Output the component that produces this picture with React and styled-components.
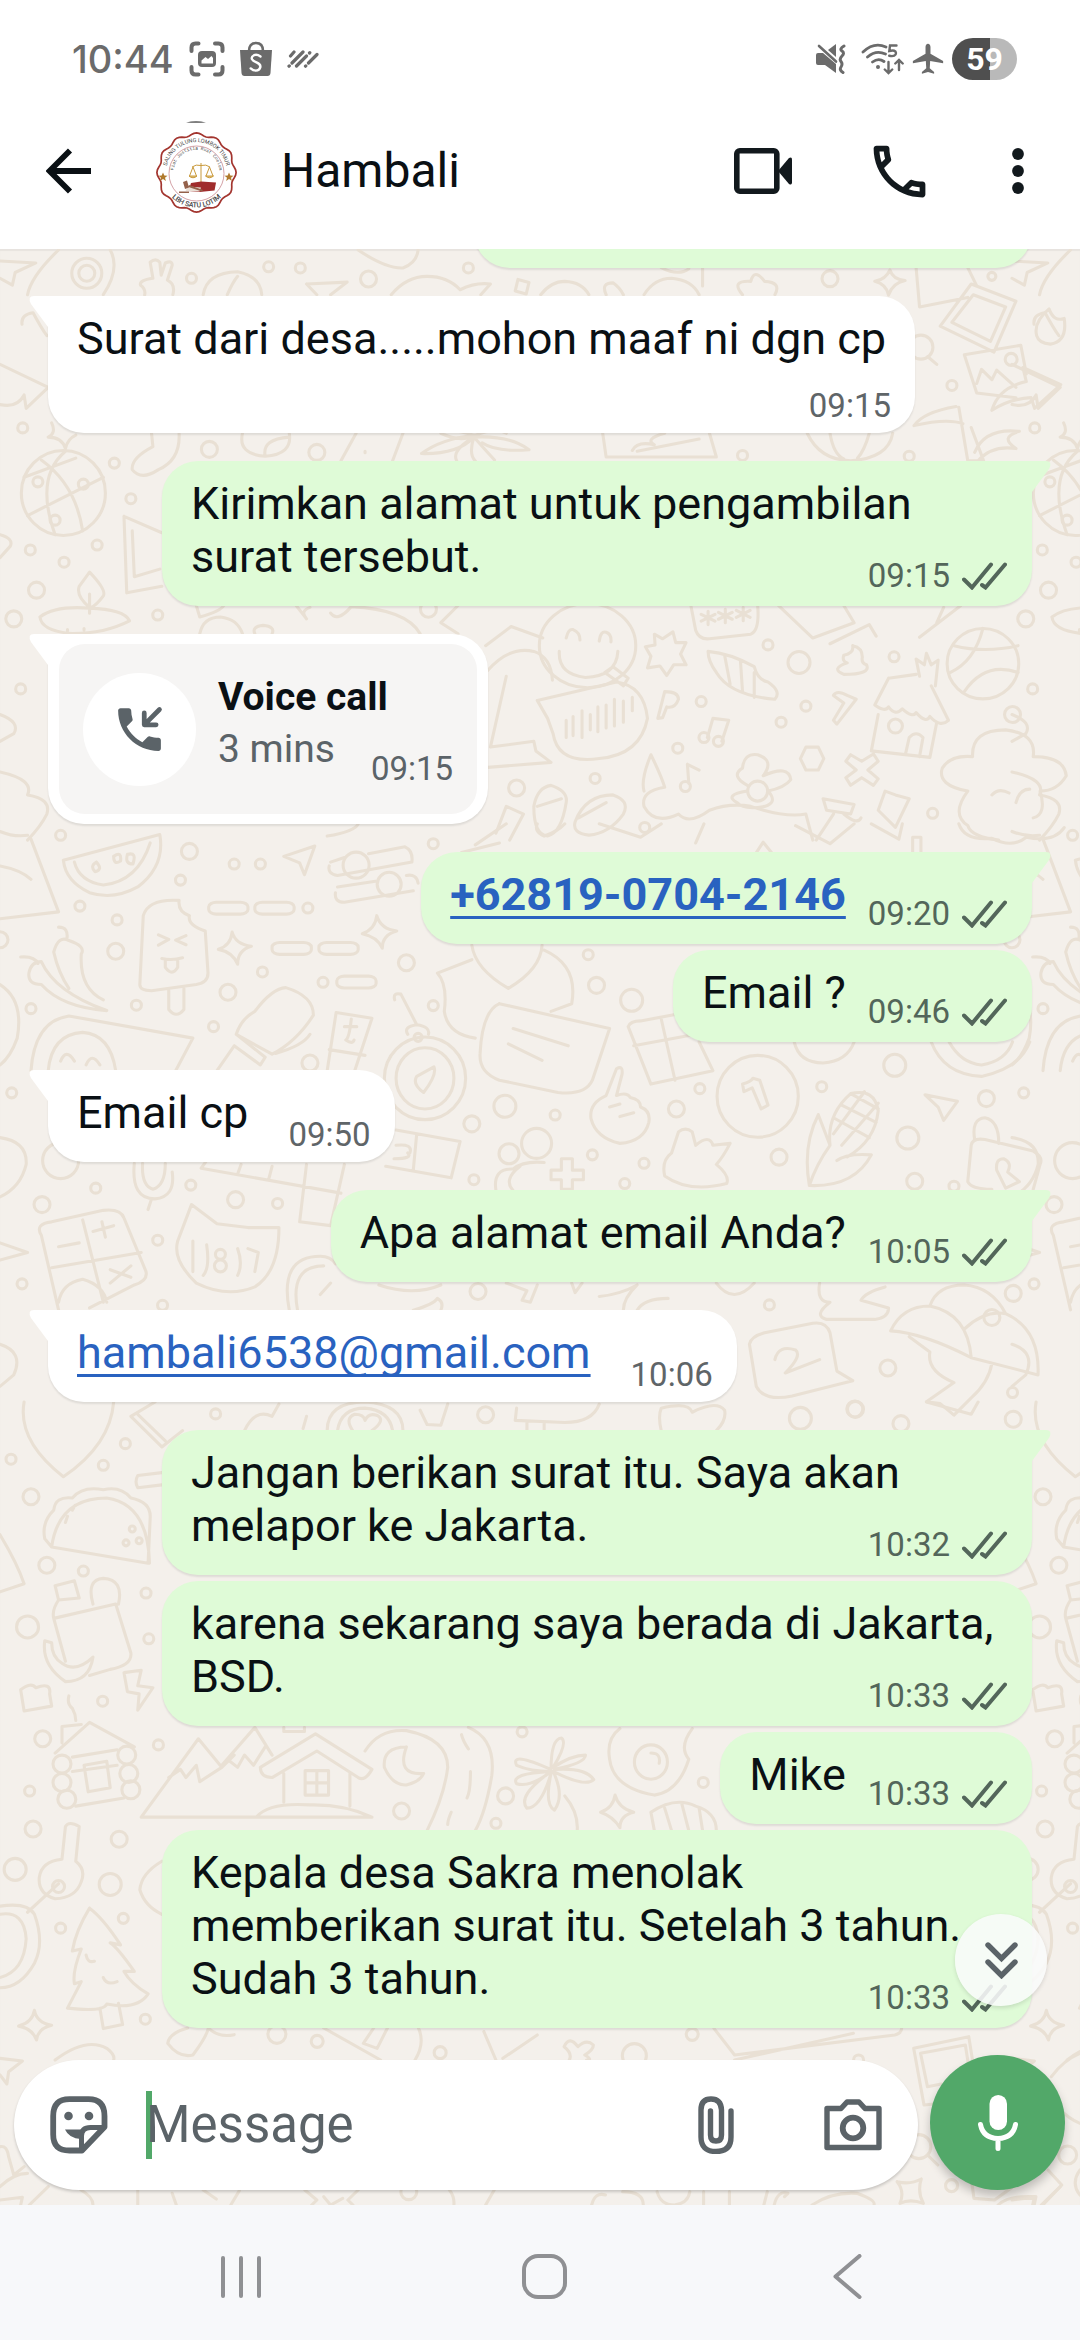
import React from "react";
import styled, { createGlobalStyle, css } from "styled-components";

const color = {
  ink: "#0a1014",
  icon: "#5b6368",
  status: "#6b6b6b",
  link: "#2962c0",
  sent: "#dffbd7",
  received: "#ffffff",
  wall: "#f4f0eb",
  doodle: "#e9e0d4",
  green: "#52a869",
  nav: "#f7f8fa",
};

const GlobalStyle = createGlobalStyle`
  *, *::before, *::after { box-sizing: border-box; }
  body { margin: 0; background: #fff; }
  button { border: 0; padding: 0; background: none; font: inherit; color: inherit; }
  svg { display: block; flex: none; }
`;

/* ---------- layout ---------- */

const Screen = styled.div`
  display: flex;
  flex-direction: column;
  height: 100vh;
  min-height: 900px;
  font-family: Roboto, "Liberation Sans", sans-serif;
  color: ${color.ink};
  background: #fff;
`;

const StatusBar = styled.div`
  display: flex;
  align-items: center;
  justify-content: space-between;
  height: 93px;
  padding: 25px 63px 0 72px;
  color: ${color.status};
`;

const StatusGroup = styled.div`
  display: flex;
  align-items: center;
  gap: ${(p) => p.$gap}px;
`;

const Clock = styled.span`
  font: 500 38px/42px Inter, Roboto, sans-serif;
`;

const Battery = styled.span`
  display: flex;
  align-items: center;
  justify-content: center;
  width: 65px;
  height: 42px;
  border-radius: 21px;
  background: linear-gradient(90deg, #4f4f4f 59%, #b9b9b9 59%);
  color: #fff;
  font: 700 32px/42px Roboto, sans-serif;
`;

const Header = styled.header`
  display: flex;
  align-items: center;
  height: 156px;
  padding: 0 11px 0 46px;
`;

const HeaderButton = styled.button`
  display: flex;
  align-items: center;
  justify-content: center;
  width: ${(p) => p.$width}px;
  height: 120px;
`;

const BackButton = styled(HeaderButton)`
  justify-content: flex-start;
`;

const Contact = styled.h1`
  flex: 1;
  margin: 0 0 0 35px;
  font-size: 48px;
  line-height: 56px;
  font-weight: 400;
`;

const Chat = styled.main`
  position: relative;
  flex: 1;
  min-height: 0;
  display: flex;
  flex-direction: column;
  background: ${color.wall};
  overflow: hidden;
  box-shadow: inset 0 2px 1px rgba(0, 0, 0, 0.05);
`;

const Wallpaper = styled.svg`
  position: absolute;
  top: 0;
  left: 0;
  fill: none;
  stroke: ${color.doodle};
  stroke-width: 3.1;
  stroke-linecap: round;
  stroke-linejoin: round;
  path,
  ellipse,
  rect {
    vector-effect: non-scaling-stroke;
  }
`;

const Messages = styled.div`
  position: relative;
  flex: 1;
  min-height: 0;
  display: flex;
  flex-direction: column;
  justify-content: flex-end;
  padding: 0 48px 27px;
  overflow: hidden;
`;

/* ---------- bubbles ---------- */

const tail = css`
  &::before {
    content: "";
    position: absolute;
    top: 0;
    width: 22px;
    height: 34px;
    background: inherit;
    clip-path: path("M5 0 H22 V34 L19 31 L2 8 Q-2 0 5 0 Z");
    ${(p) => (p.$sent ? "right: -19px; transform: scaleX(-1);" : "left: -19px;")}
  }
`;

const Bubble = styled.article`
  position: relative;
  flex: none;
  display: ${(p) => (p.$stacked ? "flex" : "block")};
  flex-direction: column;
  align-self: ${(p) => (p.$sent ? "flex-end" : "flex-start")};
  max-width: calc(100% - 114px);
  margin-top: ${(p) => (p.$first ? 28 : 6)}px;
  padding: ${(p) => (p.$sent ? "16px 35px 11px 29px" : "16px 29px 8px 29px")};
  border-radius: 36px;
  background: ${(p) => (p.$sent ? color.sent : color.received)};
  box-shadow: 0 2px 2px rgba(0, 0, 0, 0.09);
  font-size: 45px;
  line-height: 53px;
  ${(p) =>
    p.$first &&
    (p.$sent ? "border-top-right-radius: 0;" : "border-top-left-radius: 0;")}
  ${(p) => p.$first && tail}
`;

const EarlierBubble = styled(Bubble)`
  width: 558px;
  height: 92px;
`;

const Meta = styled.div`
  float: right;
  display: flex;
  align-items: center;
  gap: 12px;
  align-self: flex-end;
  margin: ${(p) =>
    p.$stacked
      ? "21px -5px 0 0"
      : p.$sent
      ? "26px -10px 0 22px"
      : "29px -5px 0 40px"};
  color: ${(p) => (p.$sent ? "#53665a" : "#5f6568")};
  font-size: 33px;
  line-height: 39px;
`;

const Link = styled.a`
  color: ${color.link};
  font-weight: ${(p) => (p.$strong ? 700 : 400)};
  text-decoration: underline;
  text-decoration-thickness: 3px;
  text-underline-offset: 6px;
  text-decoration-skip-ink: none;
`;

const CallBubble = styled(Bubble)`
  padding: 10px 11px;
  max-width: none;
`;

const CallCard = styled.div`
  display: flex;
  align-items: center;
  height: 170px;
  padding: 0 24px;
  border-radius: 26px;
  background: #f6f5f4;
`;

const CallIcon = styled.span`
  display: flex;
  align-items: center;
  justify-content: center;
  width: 113px;
  height: 113px;
  margin-right: 22px;
  border-radius: 50%;
  background: #fff;
`;

const CallText = styled.div`
  display: flex;
  flex-direction: column;
  gap: 6px;
  padding-bottom: 13px;
  font-size: 39px;
  line-height: 46px;
`;

const CallRow = styled.div`
  display: flex;
  gap: 36px;
  height: 46px;
  color: ${color.icon};
`;

const CallTime = styled.time`
  padding-top: 20px;
  font-size: 33px;
  line-height: 46px;
`;

/* ---------- bottom ---------- */

const ScrollDown = styled.button`
  position: absolute;
  right: 33px;
  bottom: 199px;
  display: flex;
  align-items: center;
  justify-content: center;
  width: 92px;
  height: 92px;
  border-radius: 50%;
  background: rgba(249, 250, 251, 0.88);
  box-shadow: 0 2px 4px rgba(0, 0, 0, 0.12);
`;

const Composer = styled.form`
  position: relative;
  display: flex;
  align-items: flex-end;
  gap: 12px;
  padding: 0 15px 15px 14px;
`;

const Field = styled.div`
  flex: 1;
  min-width: 0;
  display: flex;
  align-items: center;
  height: 130px;
  padding: 0 36px;
  border-radius: 65px;
  background: #fff;
  box-shadow: 0 2px 3px rgba(0, 0, 0, 0.18);
`;

const TextInput = styled.input`
  flex: 1;
  min-width: 0;
  height: 68px;
  margin: 0 40px 0 38px;
  padding: 0;
  border: 0;
  outline: 0;
  background: linear-gradient(${color.green}, ${color.green}) left / 6px 68px no-repeat;
  color: ${color.ink};
  font: 400 51px/68px Roboto, "Liberation Sans", sans-serif;
  &::placeholder {
    color: ${color.icon};
    opacity: 1;
  }
`;

const FieldButton = styled.button`
  display: flex;
  flex: none;
  margin-left: ${(p) => p.$space || 0}px;
`;

const MicButton = styled.button`
  display: flex;
  flex: none;
  align-items: center;
  justify-content: center;
  width: 135px;
  height: 135px;
  border-radius: 50%;
  background: ${color.green};
  box-shadow: 0 6px 10px rgba(0, 0, 0, 0.22);
`;

const NavBar = styled.nav`
  display: flex;
  align-items: center;
  justify-content: center;
  gap: 210px;
  height: 135px;
  padding: 8px 0 0 8px;
  background: ${color.nav};
`;

const NavButton = styled.button`
  display: flex;
  align-items: center;
  justify-content: center;
  width: 93px;
  height: 90px;
`;

/* ---------- icons ---------- */

const ScreenshotIcon = () => (
  <svg width="36" height="36" viewBox="0 0 36 36" fill="none" stroke="currentColor" strokeWidth="4" strokeLinecap="round">
    <path d="M2.500 10V6.500Q2.500 2.500 6.500 2.500H9.500M26 2.500h3.500q4 0 4 4V10M33.500 26v3.500q0 4-4 4H26M9.500 33.500h-3q-4 0-4-4V26" />
    <rect x="9" y="10" width="18" height="16" rx="4" fill="currentColor" stroke="none" />
    <path d="M12.500 22.500v-3l4-3.500 2.500 2 3.500-3 1.500 2v5.500z" fill="#fff" stroke="none" />
  </svg>
);

const BagIcon = () => (
  <svg width="32" height="36" viewBox="0 0 32 36">
    <path d="M9 10Q9 2 16 2t7 8" fill="none" stroke="currentColor" strokeWidth="2.600" />
    <path d="M0 9h32l-1.500 23q-.3 3-3 3h-23q-2.700 0-3-3z" fill="currentColor" />
    <path d="M20.500 15.500Q17 13 14 14.200q-3 1.500-2 4 .8 1.700 4.500 3.200 4.500 1.800 3.800 5-1 3.200-4.300 3.200-3 0-5.300-2.200" fill="none" stroke="#fff" strokeWidth="2.400" strokeLinecap="round" />
  </svg>
);

const SlashesIcon = () => (
  <svg width="32" height="18" viewBox="0 0 32 18" fill="none" stroke="currentColor" strokeWidth="3.200" strokeLinecap="round">
    <path d="M7 2L3.500 6M16 2L5 13M2 16.200l.3-.3M22.500 3l.3-.3M19.500 6L9.500 16M30 4.500L21.500 13M18.500 16.200l.3-.3" />
  </svg>
);

const MuteIcon = () => (
  <svg width="36" height="30" viewBox="0 0 36 30">
    <path d="M0 11q0-2 2-2h5L20 20v9L9 21H2q-2 0-2-2z" fill="currentColor" />
    <path d="M20 0v13l-8-7z" fill="currentColor" />
    <path d="M3 2l17 15.500" stroke="currentColor" strokeWidth="2.600" strokeLinecap="round" />
    <path d="M28 2q-5 3-2 5t0 5-1 5.500 0 5.500 2 5.500" fill="none" stroke="currentColor" strokeWidth="3" strokeLinecap="round" />
  </svg>
);

const WifiIcon = () => (
  <svg width="44" height="32" viewBox="0 0 44 32" fill="none" stroke="currentColor" strokeWidth="2.800" strokeLinecap="round">
    <path d="M3 9Q14-1.500 26 4M7.500 14Q16 6.500 25.500 11M12.500 19q6-4.500 11.500-.5" />
    <circle cx="18" cy="24" r="2" fill="currentColor" stroke="none" />
    <path d="M36.500 2.500h-6.500l-.7 5.500q6.500-1.500 6.700 2 0 4-6.800 2.800" strokeWidth="2.400" />
    <path d="M28.500 19v10.500M24.800 26.500l3.700 3.500 3.700-3.500M39 27V17.500M35.300 20.500l3.700-3.500 3.700 3.500" strokeWidth="2.400" />
  </svg>
);

const PlaneIcon = () => (
  <svg width="32" height="32" viewBox="1 1.500 22 21">
    <path fill="currentColor" d="M22.400 15v-1.600l-8.700-5V3.700C13.700 2.500 13 1.500 12 1.500s-1.700 1-1.700 2.200v4.700l-8.700 5V15l8.900-1.600.3 4.900-3 2.700v1.100l4.200-1.200 4.200 1.200v-1.100l-3-2.700.3-4.900z" />
  </svg>
);

const BackArrow = () => (
  <svg width="46" height="46" viewBox="0 0 46 46" fill="none" stroke={color.ink} strokeWidth="5.800">
    <path d="M45 23H4M24 2.500L3.500 23 24 43.500" />
  </svg>
);

const VideoIcon = () => (
  <svg width="58" height="46" viewBox="0 0 58 46">
    <rect x="2.800" y="2.800" width="40" height="40.400" rx="3" fill="none" stroke="#12191d" strokeWidth="5.600" />
    <path d="M44 23L55 10q3-1.500 3 1.500v23q0 3-3 1.500z" fill="#12191d" />
  </svg>
);

const PhoneIcon = () => (
  <svg width="69" height="69" viewBox="0 0 24 24" fill="#12191d">
    <path d="M6.540 5c.06.89.21 1.760.45 2.590l-1.200 1.200c-.41-1.200-.67-2.470-.76-3.790h1.510m9.860 12.020c.85.24 1.720.39 2.600.45v1.490c-1.320-.09-2.590-.35-3.800-.75l1.200-1.190M7.500 3H4c-.55 0-1 .45-1 1 0 9.390 7.610 17 17 17 .55 0 1-.45 1-1v-3.490c0-.55-.45-1-1-1-1.240 0-2.450-.2-3.570-.57-.1-.04-.21-.05-.31-.05-.26 0-.51.1-.71.29l-2.200 2.200c-2.830-1.450-5.150-3.760-6.590-6.590l2.200-2.200c.28-.28.36-.67.25-1.020C8.700 6.450 8.500 5.250 8.500 4c0-.55-.45-1-1-1z" />
  </svg>
);

const MoreIcon = () => (
  <svg width="12" height="46" viewBox="0 0 12 46" fill="#12191d">
    <circle cx="6" cy="6" r="5.900" />
    <circle cx="6" cy="23" r="5.900" />
    <circle cx="6" cy="40" r="5.900" />
  </svg>
);

const IncomingCallIcon = () => (
  <svg width="57" height="57" viewBox="0 0 24 24">
    <path fill={color.icon} d="M20 15.500c-1.250 0-2.450-.2-3.570-.57-.35-.11-.74-.03-1.020.24l-2.200 2.200c-2.830-1.440-5.150-3.750-6.590-6.590l2.200-2.210c.28-.26.36-.65.25-1C8.700 6.450 8.500 5.250 8.500 4c0-.55-.45-1-1-1H4c-.55 0-1 .45-1 1 0 9.390 7.610 17 17 17 .55 0 1-.45 1-1v-3.500c0-.55-.45-1-1-1z" />
    <path d="M20.400 3.600L14.500 9.500M14 5v5h5" fill="none" stroke={color.icon} strokeWidth="2" strokeLinecap="round" strokeLinejoin="round" />
  </svg>
);

const Checks = () => (
  <svg width="45" height="28" viewBox="0 0 45 28" fill="none" stroke="currentColor" strokeWidth="4" strokeLinecap="round">
    <path d="M2 17.500L10 25.500 29 2.500M20 23l3.500 2.500L43 2.500" />
  </svg>
);

const ChevronsDown = () => (
  <svg width="33" height="38" viewBox="0 0 33 38" fill="none" stroke={color.icon} strokeWidth="5.400" strokeLinecap="round">
    <path d="M3 4l13.500 13.500L30 4M3 21l13.500 13.500L30 21" />
  </svg>
);

const StickerIcon = () => (
  <svg width="58" height="58" viewBox="0 0 58 58">
    <path d="M19.500 3.200h19Q54.500 3.200 54.500 20v11L32 54.500H19.500Q3.200 54.500 3.200 38.500V20Q3.200 3.200 19.500 3.200z" fill="none" stroke={color.icon} strokeWidth="5.800" strokeLinejoin="round" />
    <path d="M31.500 54V40q0-8.500 9-8.500H54" fill="none" stroke={color.icon} strokeWidth="5" />
    <path d="M15 33.500h20q-3 3-4 9.500-12-.5-16-9.500z" fill={color.icon} />
    <circle cx="18.500" cy="20" r="4.300" fill={color.icon} />
    <circle cx="39" cy="20" r="4.300" fill={color.icon} />
  </svg>
);

const ClipIcon = () => (
  <svg width="36" height="58" viewBox="0 0 36 58" fill="none" stroke={color.icon} strokeWidth="5.400" strokeLinecap="round">
    <path d="M33 15v26q0 14.500-15 14.500T3 41V14Q3 3 13 3t10.500 11v25q0 6-5.500 6t-5.500-6V15" />
  </svg>
);

const CameraIcon = () => (
  <svg width="58" height="52" viewBox="0 0 58 52" fill="none" stroke={color.icon} strokeWidth="5.400" strokeLinejoin="round">
    <path d="M3 9.500h14l6-6.500h12l6 6.500h14v39H3z" />
    <circle cx="29" cy="29" r="10.300" strokeWidth="5.800" />
  </svg>
);

const MicIcon = () => (
  <svg width="40" height="56" viewBox="0 0 40 56">
    <rect x="11.500" y="0" width="17.500" height="35" rx="8.750" fill="#fff" />
    <path d="M2.500 29.500Q5 43 20 43.500 35 43 37.500 29.500M20 44v9.500" fill="none" stroke="#fff" strokeWidth="5" strokeLinecap="round" />
  </svg>
);

const Avatar = () => {
  const edge = Array.from({ length: 97 }, (_, i) => {
    const a = (i / 96) * Math.PI * 2;
    const r = 38.2 + 1.4 * Math.cos(a * 12);
    return `${i ? "L" : "M"}${(50.5 + r * Math.sin(a)).toFixed(1)} ${(51.500 - r * Math.cos(a)).toFixed(1)}`;
  }).join("");
  return (
    <svg width="100" height="100" viewBox="0 0 100 100" role="img" aria-label="LBH Satu Lotim">
      <defs>
        <path id="ring-top" d="M20 51.500a30.500 30.500 0 0 1 61 0" />
        <path id="ring-inner" d="M27.500 51.500a23 23 0 0 1 46 0" />
        <path id="ring-bottom" d="M15.500 51.500a35 35 0 0 0 70 0" />
      </defs>
      <path d="M40 1.500Q50-1 60 1.500Q50 2.200 40 1.500z" fill="#555" />
      <path d={edge + "Z"} fill="#fff" stroke="#a3352f" strokeWidth="1.700" />
      <circle cx="50.500" cy="52.500" r="27.500" fill="none" stroke="#c98a90" strokeWidth=".8" />
      <g fill="#444" fontFamily="Roboto, sans-serif" textAnchor="middle">
        <text fontSize="5.500"><textPath href="#ring-top" startOffset="50%">SALING TULUNG LOMBOK TIMUR</textPath></text>
        <text fontSize="4.500" fontFamily="Liberation Mono, monospace"><textPath href="#ring-inner" startOffset="50%">Fiat Justitia Ruat Coelum</textPath></text>
        <text fontSize="7" fontWeight="500"><textPath href="#ring-bottom" startOffset="50%">LBH SATU LOTIM</textPath></text>
      </g>
      <g fill="#b07a2c">
        <path id="seal-star" d="M17 51.500l1.300 3 3.200.2-2.500 2 .9 3.200-2.900-1.800-2.900 1.800.9-3.200-2.500-2 3.200-.2z" />
        <use href="#seal-star" x="66" />
      </g>
      <g fill="none" stroke="#c99a3c" strokeWidth="1">
        <path d="M55 42v19M46 46q4-3 9-1.500 5-1.500 9 1.500M47 46l-3.500 9M47 46l3.500 9M63.500 46L60 55M63.500 46l3.500 9" />
        <path d="M43 55h8q-4 3.500-8 0zM59.500 55h8q-4 3.500-8 0z" fill="#e5c987" />
      </g>
      <path d="M45 62l10-1.500 15 1-1.500 8-15 1.500-11-1z" fill="#a02c2c" />
      <path d="M42 65.500l13 1-1.500 4-14-.5z" fill="#eadfd6" />
      <path d="M37 61l4-1.500 2 7-4 1.500zM43 64l14 5-1 1.500-13.500-4.500zM33 70.500h10V72H33z" fill="#94614b" />
    </svg>
  );
};

/* ---------- wallpaper ---------- */

const bands = [
  {
    x: 0, y: 0, sx: 0.6888, sy: 0.3827, oy: 240,
    dots: [[390,70,5],[436,73,5],[278,100,5],[535,102,8],[680,73,5],[1205,101,8],[1440,95,4],[126,87,15],[126,87,8],[33,491,5],[304,547,8],[460,555,8],[166,583,5],[190,676,5],[1382,380,5],[1078,563,5],[1320,565,5],[44,810,5],[141,797,5],[93,842,5],[53,915,8],[20,990,8],[229,980,5],[622,965,8],[1115,1058,5],[1160,1104,11],[1298,1089,5],[30,1173,5],[1018,1206,5],[1170,1218,5],[1134,1260,5],[984,1328,5],[1470,1240,8],[864,1407,5],[750,1432,8],[936,1535,5],[1354,1498,5],[1337,280,12],[1468,312,6],[55,632,5],[121,638,5],[80,732,5],[1022,1300,5],[1043,1310,5],[995,1428,5],[1300,1270,7],[1100,1440,10]],
    d: "M0 55L52 60L22 85L18 118L0 100M160 26Q175 75 150 143M40 143Q45 95 85 26M222 100L218 58q8-12 14 0L234 92L240 60q10-8 10 6L243 105q12 10 8 38M222 100q-20 5-18 18q8 10 6 26M295 143Q300 85 345 83Q378 95 380 143M330 143Q338 110 345 95M520 26Q560 75 585 73Q605 60 607 26M445 115L504 110L480 143M445 115L460 143M568 143Q590 95 620 95Q650 95 668 130Q690 110 712 115L698 143M752 103l16 8l-4 30l-16-8zM785 143Q800 108 820 108Q845 110 855 143M880 143Q872 112 890 112Q900 125 905 143M935 143Q950 100 975 100Q1005 105 1015 143M960 72Q985 95 1000 75M1020 72V120M1078 143Q1060 105 1090 108Q1095 72 1110 108Q1135 110 1125 143M1292 78q4 25 22 28q-18 6-24 38q-3-28-20-36q16-5 22-30zM1330 72L1335 175L1405 150M1405 72L1418 120M1410 115L1475 160L1443 293L1365 225ZM1413 143L1460 175L1438 265L1382 215ZM1505 250Q1500 215 1523 180Q1530 215 1545 205Q1550 265 1525 272Q1508 270 1505 250M1347 305L1360 325M1400 300L1482 275L1490 350M1400 300L1418 400L1475 412M1418 375L1425 338L1440 365L1447 340L1475 385M1440 445Q1450 385 1490 370L1485 333L1540 378L1502 440L1497 412Q1465 415 1440 445ZM32 220Q30 195 48 190Q60 230 68 250M0 430Q25 440 35 405L38 440L70 385L0 325M75 478Q82 505 70 515Q90 515 95 545Q98 520 110 510M35 620L110 570M40 720L150 620M60 575Q110 640 120 760M95 552Q50 620 80 770M220 505L222 540Q190 570 192 600Q205 630 230 600Q262 575 260 505M352 505Q345 560 385 565Q425 560 420 505M385 565Q380 520 420 515M517 505L495 577M585 505L570 577M530 552v4M688 510Q650 490 640 505Q670 530 688 510Q640 520 612 558Q665 560 688 515Q655 550 663 577M688 515Q680 560 690 577M688 515Q705 550 718 575M688 515Q740 510 768 548Q720 555 700 530M690 510Q720 490 735 505M875 505L880 567L1040 567L1030 505M918 550Q925 525 950 535Q935 520 965 505M925 552L1015 520M1172 505Q1190 575 1235 577Q1290 570 1296 505M1205 505Q1210 560 1225 572M1262 505Q1255 550 1245 570M1388 435Q1340 450 1327 485Q1375 465 1398 480M1392 437L1405 577L1428 577L1410 490M1415 555Q1430 490 1480 500Q1450 515 1475 545Q1440 535 1420 577M0 770Q20 780 15 800L0 830M180 722L235 765M180 722L184 922L235 905M192 760L195 880L232 860M130 960Q110 930 115 905L130 868Q155 915 150 930Q140 955 132 960M130 925V975M58 985Q80 955 130 962Q180 965 188 995Q150 1030 100 1028Q60 1020 58 985M98 1018v4M122 1015v4M285 955L290 985Q320 970 325 955M290 1029Q295 985 320 985Q345 990 352 1029M370 1029Q365 1010 382 1007Q400 1010 395 1029M430 955L445 990Q435 970 450 960M480 975Q490 1000 510 958Q590 965 610 1029M665 955L640 1000L665 1029M705 1060L742 1010L788 1040M812 1075Q810 1135 850 1143Q895 1140 897 1075M822 1040Q825 1015 832 1018Q842 1025 842 1045M870 1048Q872 1020 880 1025Q888 1030 887 1050M878 1130L890 1115L912 1145L905 1165ZM708 1125Q740 1060 775 1075Q800 1090 802 1150M735 1140L712 1325L775 1310L778 1335L800 1365L708 1378M780 1203L895 1155Q935 1165 940 1250Q930 1345 870 1355Q810 1370 803 1290L795 1250ZM822 1255v45M832 1245v50M845 1230v70M857 1240v40M868 1220v65M880 1215v60M892 1200v70M905 1205v55M918 1195v35M1003 955L1010 1020Q1015 1045 1030 1042L1090 1030Q1103 1020 1100 955M1028 970v35M1018 978l20 18M1038 978l-20 18M1053 965v35M1043 973l20 18M1063 973l-20 18M1079 960v35M1069 968l20 18M1089 968l-20 18M950 1030l12 12l15-18l4 28l15 0l-8 30l8 28l-18 0l-10 28l-10-25l-18 5l5-30l-8-25l14-5zM1130 955L1180 1040L1240 1000L1225 955M1205 1055L1262 1005L1272 1035M1395 955L1335 1038M1360 1000L1370 960M1385 1060Q1430 1080 1478 1060M1400 1180Q1430 1100 1478 1130M1427 1015Q1415 1100 1380 1130M1028 1075Q1060 1080 1095 1115Q1100 1150 1115 1155Q1135 1180 1125 1200Q1060 1190 1040 1130Q1028 1100 1028 1075M1052 1085L1060 1160M1075 1100L1078 1180M1095 1130L1095 1195M1238 1060Q1240 1080 1225 1085Q1222 1100 1230 1105Q1205 1120 1225 1135Q1265 1135 1258 1110Q1250 1105 1252 1090Q1252 1065 1238 1060M955 1250L965 1180Q985 1180 985 1200Q980 1225 968 1220L962 1248zM1210 1190Q1215 1175 1230 1190L1243 1200L1215 1265L1210 1255L1225 1210ZM1027 1300L1035 1250L1058 1255L1048 1310M998 1370L1000 1420M998 1370L1015 1385M1170 1325h18l8 30l-8 30h-18l-8-30zM1235 1345L1251 1362L1268 1343L1275 1362L1260 1385L1275 1408L1268 1425L1251 1405L1235 1425L1228 1405L1243 1385L1228 1362ZM1290 1145L1270 1215Q1285 1235 1290 1220Q1300 1245 1310 1225Q1325 1250 1330 1235Q1345 1265 1350 1245Q1365 1275 1377 1255L1352 1165M1290 1145L1330 1135M1335 1140L1330 1095L1342 1110L1345 1080L1352 1110L1362 1098L1358 1165M1275 1240L1265 1335L1350 1352L1360 1260M1315 1340L1320 1300Q1330 1280 1340 1300L1335 1350M1405 1440Q1360 1425 1368 1380Q1380 1345 1412 1350Q1410 1280 1460 1280Q1505 1290 1500 1350Q1545 1350 1548 1400Q1535 1440 1510 1440Q1520 1500 1500 1510M1405 1440Q1380 1500 1405 1530Q1410 1560 1450 1568M1440 1450Q1450 1430 1465 1445M1475 1470q5-35 20-35M775 1480Q780 1430 800 1425Q825 1440 822 1470Q815 1550 795 1557Q775 1555 775 1480M835 1520Q850 1450 890 1450Q915 1465 905 1500Q885 1550 855 1555Q830 1550 835 1520M840 1510L880 1470M780 1480L815 1460M935 1440Q930 1410 945 1345Q960 1400 965 1430Q930 1440 935 1480Q950 1530 985 1500Q1000 1530 1030 1490Q1060 1470 1090 1480Q1140 1510 1170 1500L1180 1568M1085 1425Q1060 1400 1078 1380Q1080 1340 1100 1345Q1125 1360 1108 1400Q1145 1370 1148 1410Q1140 1430 1115 1440Q1130 1470 1110 1480Q1080 1490 1070 1470Q1050 1450 1085 1440M1195 1460L1240 1475L1235 1500L1200 1490ZM1210 1500L1185 1568M1225 1500Q1245 1530 1250 1510M1285 1440L1300 1450L1320 1460L1300 1535L1275 1490ZM720 1550L735 1480L760 1500L740 1568M0 1390Q50 1410 40 1450Q75 1460 68 1500Q60 1530 40 1568M0 1240Q30 1260 20 1290L0 1310",
    ovals: [[92,661,61,111],[853,1060,70,110],[1427,1107,52,92]],
  },
  {
    x: 0, sx: 0.6888, sy: 0.3827, oy: 820,
    dots: [[88,40,5],[275,82,8],[340,115,5],[378,115,5],[262,157,5],[116,225,5],[170,261,5],[168,343,8],[447,230,5],[381,397,5],[590,373,8],[469,424,5],[331,450,8],[198,484,5],[45,493,5],[310,540,5],[450,635,8],[629,485,5],[629,62,5],[854,352,5],[866,432,8],[917,471,11],[1299,641,11],[1016,702,5],[1193,697,5],[982,755,8],[1131,881,8],[935,897,5],[806,771,5],[685,794,8],[733,748,11],[860,875,5],[1432,728,8],[1318,831,11],[1328,944,8],[1385,957,5],[907,950,5],[688,940,5],[17,713,5],[88,890,18],[61,1005,8],[139,962,5],[277,954,5],[342,992,8],[403,1002,5],[229,1098,5],[32,1212,5],[1471,1237,8],[1117,1267,5],[1440,1300,8],[1289,1432,8],[1242,1540,8],[1470,1496,5],[694,1232,8],[236,1268,5],[0,313,8],[517,118,13],[565,168,12],[607,568,4],[779,845,15],[739,872,10],[320,1135,5],[320,1165,6]],
    d: "M92 105L232 38Q240 120 200 175Q165 210 130 190Q95 160 92 105M108 110Q115 160 150 170Q200 160 218 60M165 95q12-15 10 12q-10 12-10-12M140 110q-10 10-2 25q12-5 2-25M185 90q14-8 8 25q-12 0-8-25M412 95L457 68L442 143L435 112ZM480 110L500 98M478 120Q475 140 490 145L598 110Q600 80 588 70L535 88M490 175L545 160M487 190Q485 215 500 215L600 185M590 145Q605 140 607 165M475 42Q515 30 520 10M690 65L735 10M670 85L725 60M780 10Q775 30 790 42Q810 30 820 10M870 10L930 45L960 10M1022 10L1010 60M1155 15L1205 62L1240 10M1265 10L1305 50L1310 10M1325 85V45h12v45M1098 85L1108 58L1120 85M1392 10Q1400 55 1440 48Q1470 75 1490 45Q1530 60 1545 20M0 30Q20 45 40 40M45 50L85 240L0 258M0 120Q30 130 45 155M203 430L208 250Q215 205 260 210Q258 240 275 250Q272 275 298 290L302 400Q302 425 285 430L220 446Q203 446 203 430M245 445V495Q256 520 267 495V440M230 300l15 12l-15 15M270 302l-15 12l15 12M235 362Q250 368 265 360M240 365V385Q250 410 258 385V363M337 293Q342 325 365 330Q345 340 345 377Q338 345 317 338Q335 328 337 293ZM547 250Q553 285 576 290Q555 300 555 335Q548 305 526 297Q545 285 547 250ZM42 400Q45 370 60 370Q80 450 155 498Q90 490 60 430Q40 430 42 400M78 345Q85 300 100 315Q125 330 118 350Q115 440 150 470M78 345Q85 400 100 440M30 358Q50 355 55 375M85 280Q100 280 97 312M45 655Q50 525 100 512L280 570L255 655M70 655Q75 560 120 555Q160 560 168 655M88 630q8-35 20 0M125 640q8-35 20 0M343 560Q350 520 370 500Q395 440 415 438Q455 460 455 510Q430 580 395 612ZM343 560L385 620L378 640L340 590M400 610Q440 590 450 560M340 590L315 655M488 503L540 518L515 655M488 503L475 655M478 600L530 615M510 520q-3 50-8 55q10 12 12 0M500 540h18M592 560Q585 540 605 535Q625 540 622 560M573 470Q570 450 582 455L605 535M630 645Q635 665 615 712Q598 690 605 670ZM685 327Q690 390 738 440Q785 390 787 327M685 365L635 400Q650 430 645 500Q650 560 690 570M790 340Q840 380 830 480L800 500M725 480L885 545L860 680Q850 720 810 712L725 680Q695 660 697 610Q700 500 725 480M745 545L825 590M738 585L787 628M912 540Q915 525 930 525L990 505M912 540L945 690L1035 655L1015 580M920 590L1010 560M960 520L980 680M858 780Q855 740 880 720L895 650Q905 640 903 665L895 720Q910 710 915 725Q930 730 930 750Q945 760 942 790Q935 840 900 845Q865 830 858 780M885 750l15-8M900 775l20-10M1078 690Q1090 685 1093 675L1103 680L1115 745L1105 755L1092 700L1080 710zM1153 580Q1160 635 1195 635Q1230 630 1240 580M1352 580Q1370 665 1425 670Q1480 650 1495 580M1378 580Q1395 635 1425 640Q1460 630 1470 580M1188 770Q1165 850 1175 955Q1240 960 1265 875Q1230 870 1215 890M1188 770L1205 850Q1185 900 1175 955M1205 850Q1200 770 1235 715Q1270 700 1275 760Q1270 840 1230 880M1212 780L1262 830M1222 745L1272 790M1235 715L1275 755M1255 710L1210 820M1275 740L1222 850M1343 718L1390 735L1370 785L1362 750ZM1415 835Q1410 780 1430 778Q1450 785 1450 845M1410 850Q1412 830 1430 835L1500 865Q1515 880 1510 900L1500 965M1410 850L1405 945Q1410 965 1440 965M1447 915Q1445 885 1457 885Q1470 895 1463 920L1480 945L1460 962ZM985 815Q995 800 1005 815L1010 850Q1030 820 1035 850L1060 845Q1050 880 1040 900Q1060 930 1055 950Q1000 975 965 930Q960 890 975 870ZM720 968Q715 910 745 912Q760 890 790 895M755 905Q730 940 745 968M815 885h16v30h16v25h-16v25h-16v-25h-15v-25h15zM575 810L668 840L655 935L560 905M605 820L600 915M575 850q25-5 20 20M572 885q28 0 20-15M300 890L292 910L495 975M350 900L345 925M395 905L390 940M445 900L435 1050L480 1060L500 900M278 1005L315 1055L360 1065L405 1065Q405 1180 370 1220Q330 1250 285 1210Q250 1150 258 1100ZM280 1100v80M300 1110q5 60-5 80M345 1120q8 40 0 70M360 1120L375 1130L370 1180M60 1085Q50 1055 75 1050L150 1020Q175 1015 180 1040L212 1180Q215 1205 195 1215L130 1275M60 1085L85 1280M75 1170L205 1130M120 1045L150 1260M135 1075l30-15M148 1050l5 40M160 1175l30 20M190 1165l-30 45M85 1115l30-10M85 1260Q90 1210 120 1200Q150 1215 155 1260M420 1281Q405 1140 465 1140Q480 1140 487 1160M432 1281Q420 1165 470 1165M465 1240L480 1210M550 1215Q600 1245 640 1215M735 1210L765 1230L758 1255L770 1260L780 1215M830 1210L835 1235L845 1210M870 1245Q900 1240 925 1215Q905 1250 905 1281M925 1281Q935 1250 970 1250M600 1281Q630 1265 635 1250Q645 1260 640 1281M1040 1210Q1065 1270 1095 1210M1190 1210Q1185 1260 1205 1260Q1180 1295 1200 1305L1270 1305Q1290 1300 1290 1275L1250 1255Q1255 1235 1285 1220M1293 1335Q1310 1270 1350 1270Q1405 1290 1410 1405Q1340 1340 1293 1335ZM1350 1270Q1360 1215 1400 1215Q1440 1220 1460 1290M1400 1330Q1430 1280 1460 1290Q1510 1330 1507 1450L1410 1405M1320 1350L1350 1390Q1345 1440 1385 1470L1345 1520L1365 1525L1385 1555L1410 1510Q1435 1470 1440 1420M1088 1370Q1090 1350 1110 1340L1180 1315Q1200 1310 1205 1340L1215 1440L1238 1465L1150 1505Q1110 1520 1098 1480ZM1125 1410Q1130 1370 1155 1385Q1165 1400 1140 1445L1190 1410M0 1370Q35 1390 20 1450L0 1480M0 830Q40 840 38 900Q30 960 0 985M0 1105L40 1130L0 1150M195 897Q190 990 225 990Q255 985 250 920M207 897Q205 955 222 965Q240 955 240 897M220 990L215 1018M0 430Q35 470 25 570Q15 620 0 640",
    ovals: [[617,675,59,108],[617,675,42,80],[1100,722,59,107]],
    bars: [[303,215],[370,215],[395,320],[463,320],[489,408]],
  },
  {
    x: 0, sx: 0.6888, sy: 0.40816, oy: 1400,
    dots: [[313,34,5],[182,107,5],[16,145,5],[150,160,5],[45,237,8],[68,405,8],[121,419,5],[212,473,5],[40,556,11],[216,585,5],[149,738,5],[62,830,8],[230,845,5],[43,958,5],[583,1007,8],[48,1051,8],[173,1076,8],[22,1150,11],[160,1187,11],[179,1270,5],[88,1294,5],[211,1517,5],[758,813,5],[734,970,8],[1021,937,5],[720,1037,5],[705,36,8],[1162,45,11],[1241,22,8],[1308,58,8],[1471,47,8],[192,316,3],[183,350,3],[202,345,3],[90,892,9],[90,937,9],[97,978,9],[184,870,9],[187,915,9],[190,955,9],[85,1192,6]],
    d: "M35 5Q25 100 92 188Q160 110 165 5M190 40L235 115L265 75M190 40L225 5M200 35L240 100M355 75Q370 20 395 40L405 10M440 70L445 40M475 75Q475 5 530 5Q585 10 585 75M490 75Q495 20 530 20Q565 25 570 75M512 75Q500 45 515 35Q528 35 530 50Q535 30 548 38Q560 50 540 75M610 25L620 60L640 62L650 10M750 20L748 50L820 55Q860 55 870 10M765 55v20M790 55v20M960 75Q955 40 960 20Q1000 5 1005 30Q1040 0 1052 25Q1055 50 1040 75M1345 5L1410 35L1420 5M65 340Q60 300 78 270Q80 235 105 240Q120 210 150 220Q175 210 190 240Q220 250 218 290L215 400L75 360M65 340L75 360Q85 240 155 240Q215 255 217 400M95 300l3-15M105 270l4-12M235 178L200 185q-5 15 0 30L235 208M0 330Q25 400 35 450L0 470M80 455L108 443L115 485L85 490ZM85 490Q75 515 78 535L95 640M78 535L168 500L190 620Q192 650 160 660L130 675M135 500Q125 440 150 437Q180 440 172 500M65 590Q60 650 95 690Q130 690 135 630Q110 670 90 645Q75 630 75 595ZM180 668L205 662L200 700L222 705L200 760L202 720L185 715ZM30 710Q45 690 52 705Q75 690 72 720L75 750L35 762ZM100 725q-3 20 5 30q5 15 5 30M80 865L130 790L195 850M90 840V800L118 795M105 875L170 857M105 910L170 895M122 895L155 885L160 950L128 960ZM110 995L180 975M205 1022L288 830L322 900M205 1022H540M245 925L262 905L270 925L285 895L290 935L322 900L340 870M322 895L370 802L395 870M330 880L345 900L355 870L368 895L385 850M378 900L458 818L540 905Q530 935 520 925L460 860L395 925Q378 925 378 900M412 915V985M508 915V995M443 908h34v60h-34zM460 908v60M443 938h34M372 1022Q390 985 450 992Q500 990 540 1022M412 802v10h30v-10M590 850Q555 850 558 900Q570 945 590 943Q610 935 615 915Q575 920 590 850M530 860Q550 805 590 810Q650 830 650 900Q645 970 620 1055M680 802Q720 830 714 920Q705 1010 690 1055M680 855q-8-20-10-35M683 910Q683 960 678 975M655 1010q-5 20-5 30M800 905Q740 860 750 895Q770 910 800 910Q740 915 750 940Q770 950 800 910Q750 970 765 1000Q785 1000 800 915Q790 990 805 1005Q820 970 803 910Q850 950 862 930Q850 900 805 905Q850 890 850 870Q830 870 803 900Q825 840 815 828Q800 830 800 905M820 970Q840 1010 838 1055M900 805Q880 830 885 880Q890 950 950 968Q985 960 1000 880Q985 850 1005 805M945 865q15 0 12 25M893 968Q898 1000 920 1010Q900 1018 900 1048Q890 1020 872 1010Q890 1000 893 968ZM945 1010Q980 970 1010 995Q1040 1010 1040 1055M945 1010L950 1055M965 1000L975 1055M990 990L1000 1055M1015 1000L1020 1055M95 1045Q100 1030 115 1045L110 1130Q125 1150 118 1180Q110 1220 80 1222Q55 1210 57 1170Q60 1130 90 1125ZM85 1185L40 1255M0 1240Q40 1230 50 1260Q65 1330 50 1380Q30 1440 0 1440M0 1260Q35 1250 38 1320Q35 1400 0 1415M130 1245Q110 1300 105 1350L118 1345Q105 1400 108 1430L118 1425L98 1490Q150 1500 155 1480Q200 1495 215 1455Q190 1430 180 1400L195 1400Q170 1340 160 1330L175 1335Q150 1270 130 1245M145 1490L150 1540L178 1530L172 1478M125 1360q2 20 12 15M150 1415q5 20 20 10M50 1495Q53 1525 75 1532Q55 1540 53 1568Q47 1540 27 1534Q47 1525 50 1495ZM235 1130Q205 1160 203 1200Q210 1240 235 1260",
    ovals: [[945,887,24,42]],
  },
  {
    x: 0, sx: 0.3444, sy: 0.33333, oy: 2000,
    dots: [[804,103,9],[921,124,6],[1278,158,6],[1187,575,8]],
    d: "M545 84Q490 100 487 130Q520 175 560 165Q600 110 605 84M605 84q30 30 75 20M940 84L1105 180M1215 84Q1235 130 1205 180M1085 84L1055 130L1095 145L1125 84M160 180Q250 110 310 145Q335 165 330 180M1405 95L1440 180M1460 175L1560 105M0 175L65 183L25 215L20 252L0 225M85 615L140 560M235 570Q270 590 270 615M400 570V615M500 580L512 615M590 570L628 597M695 572L670 615M885 570L920 600L905 615M940 590L960 615L995 595M1040 570L1010 600L1025 615M1305 570Q1320 590 1318 615M1410 615L1435 570M0 440Q20 435 25 470L40 525L70 500M0 560Q40 520 80 520M0 600L65 592L60 615",
  },
  {
    x: 540, sx: 0.3444, sy: 0.33333, oy: 1880,
    dots: [[442,463,6],[274,527,12],[1532,825,9],[1195,917,6],[925,540,5],[1100,800,12]],
    d: "M505 445L565 525L1030 465Q1050 460 1050 445M565 540L910 460M70 500q15-35 40 0q25-25 45-5q0 15-25 30q25 15 5 15M70 500q25 20 15 40M1165 670L1115 675L1085 505L1245 470L1265 600M1165 612L1125 620L1105 520L1235 495L1245 560M1485 590Q1520 540 1568 520M1500 680Q1540 720 1568 730M1125 825L1155 855M1037 905Q1075 915 1107 897Q1095 935 1113 970Q1075 955 1045 970Q1060 935 1037 905M1250 880L1260 955L1320 960L1400 900M1475 870L1515 915L1460 975M1330 975Q1360 945 1440 950L1435 975M1568 870Q1540 910 1568 945M150 975Q160 935 190 945M240 935Q300 935 300 975M340 935Q350 975 390 975Q430 970 435 935M475 935V975M550 935V975M660 935L650 975M680 975Q690 930 720 940L710 950M790 975Q850 935 920 940Q975 960 970 975",
  },
];

const Band = ({ x, oy, sx, sy, dots = [], d, ovals = [], bars = [] }) => (
  <g>
    <g transform={`translate(${x} ${oy - 249}) scale(${sx} ${sy})`}>
      <path d={d} />
      {ovals.map(([cx, cy, rx, ry], i) => (
        <ellipse key={i} cx={cx} cy={cy} rx={rx} ry={ry} />
      ))}
      {bars.map(([bx, by], i) => (
        <rect key={i} x={bx} y={by} width="57" height="31" rx="11" ry="12" />
      ))}
    </g>
    {dots.map(([cx, cy, r], i) => (
      <circle key={i} cx={x + cx * sx} cy={oy - 249 + cy * sy} r={r} />
    ))}
  </g>
);

const Doodles = () => (
  <Wallpaper width="1080" height="1956" viewBox="0 0 1080 1956" aria-hidden="true">
    <g id="doodle-tile">
      {bands.map((b, i) => (
        <Band key={i} {...b} />
      ))}
    </g>
    <use href="#doodle-tile" x="1012" />
  </Wallpaper>
);

/* ---------- content ---------- */

const Message = ({ sent, first, stacked, time, children }) => (
  <Bubble $sent={sent} $first={first} $stacked={stacked}>
    {children}
    <Meta $sent={sent} $stacked={stacked}>
      <time>{time}</time>
      {sent && <Checks />}
    </Meta>
  </Bubble>
);

export default function App() {
  return (
    <Screen>
      <GlobalStyle />
      <StatusBar>
        <StatusGroup $gap={15}>
          <Clock>10:44</Clock>
          <ScreenshotIcon />
          <BagIcon />
          <SlashesIcon />
        </StatusGroup>
        <StatusGroup $gap={8}>
          <MuteIcon />
          <WifiIcon />
          <PlaneIcon />
          <Battery>59</Battery>
        </StatusGroup>
      </StatusBar>

      <Header>
        <BackButton $width={100} aria-label="Back"><BackArrow /></BackButton>
        <Avatar />
        <Contact>Hambali</Contact>
        <HeaderButton $width={136} aria-label="Video call"><VideoIcon /></HeaderButton>
        <HeaderButton $width={136} aria-label="Voice call"><PhoneIcon /></HeaderButton>
        <HeaderButton $width={102} aria-label="More options"><MoreIcon /></HeaderButton>
      </Header>

      <Chat>
        <Doodles />
        <Messages>
          <EarlierBubble $sent aria-hidden="true" />
          <Message first stacked time="09:15">Surat dari desa.....mohon maaf ni dgn cp</Message>
          <Message sent first time="09:15">Kirimkan alamat untuk pengambilan surat tersebut.</Message>
          <CallBubble $first>
            <CallCard>
              <CallIcon><IncomingCallIcon /></CallIcon>
              <CallText>
                <strong>Voice call</strong>
                <CallRow>
                  <span>3 mins</span>
                  <CallTime>09:15</CallTime>
                </CallRow>
              </CallText>
            </CallCard>
          </CallBubble>
          <Message sent first time="09:20"><Link $strong href="tel:+6281907042146">+62819-0704-2146</Link></Message>
          <Message sent time="09:46">Email ?</Message>
          <Message first time="09:50">Email cp</Message>
          <Message sent first time="10:05">Apa alamat email Anda?</Message>
          <Message first time="10:06"><Link href="mailto:hambali6538@gmail.com">hambali6538@gmail.com</Link></Message>
          <Message sent first time="10:32">Jangan berikan surat itu. Saya akan melapor ke Jakarta.</Message>
          <Message sent time="10:33">karena sekarang saya berada di Jakarta, BSD.</Message>
          <Message sent time="10:33">Mike</Message>
          <Message sent time="10:33">Kepala desa Sakra menolak memberikan surat itu. Setelah 3 tahun. Sudah 3 tahun.</Message>
        </Messages>
        <ScrollDown aria-label="Scroll to latest"><ChevronsDown /></ScrollDown>
        <Composer onSubmit={(e) => e.preventDefault()}>
          <Field>
            <FieldButton type="button" aria-label="Stickers"><StickerIcon /></FieldButton>
            <TextInput aria-label="Message" placeholder="Message" />
            <FieldButton type="button" aria-label="Attach"><ClipIcon /></FieldButton>
            <FieldButton type="button" $space={90} aria-label="Camera"><CameraIcon /></FieldButton>
          </Field>
          <MicButton type="button" aria-label="Record voice message"><MicIcon /></MicButton>
        </Composer>
      </Chat>

      <NavBar>
        <NavButton aria-label="Recent apps">
          <svg width="40" height="42" viewBox="0 0 40 42" stroke="#8f9093" strokeWidth="4" strokeLinecap="round">
            <path d="M2 2v38M20 2v38M38 2v38" />
          </svg>
        </NavButton>
        <NavButton aria-label="Home">
          <svg width="45" height="45" viewBox="0 0 45 45" fill="none" stroke="#8f9093" strokeWidth="4">
            <rect x="2" y="2" width="41" height="41" rx="14" />
          </svg>
        </NavButton>
        <NavButton aria-label="Back">
          <svg width="29" height="45" viewBox="0 0 29 45" fill="none" stroke="#8f9093" strokeWidth="4" strokeLinecap="round" strokeLinejoin="round">
            <path d="M26.500 2L2.500 22.500 26.500 43" />
          </svg>
        </NavButton>
      </NavBar>
    </Screen>
  );
}
